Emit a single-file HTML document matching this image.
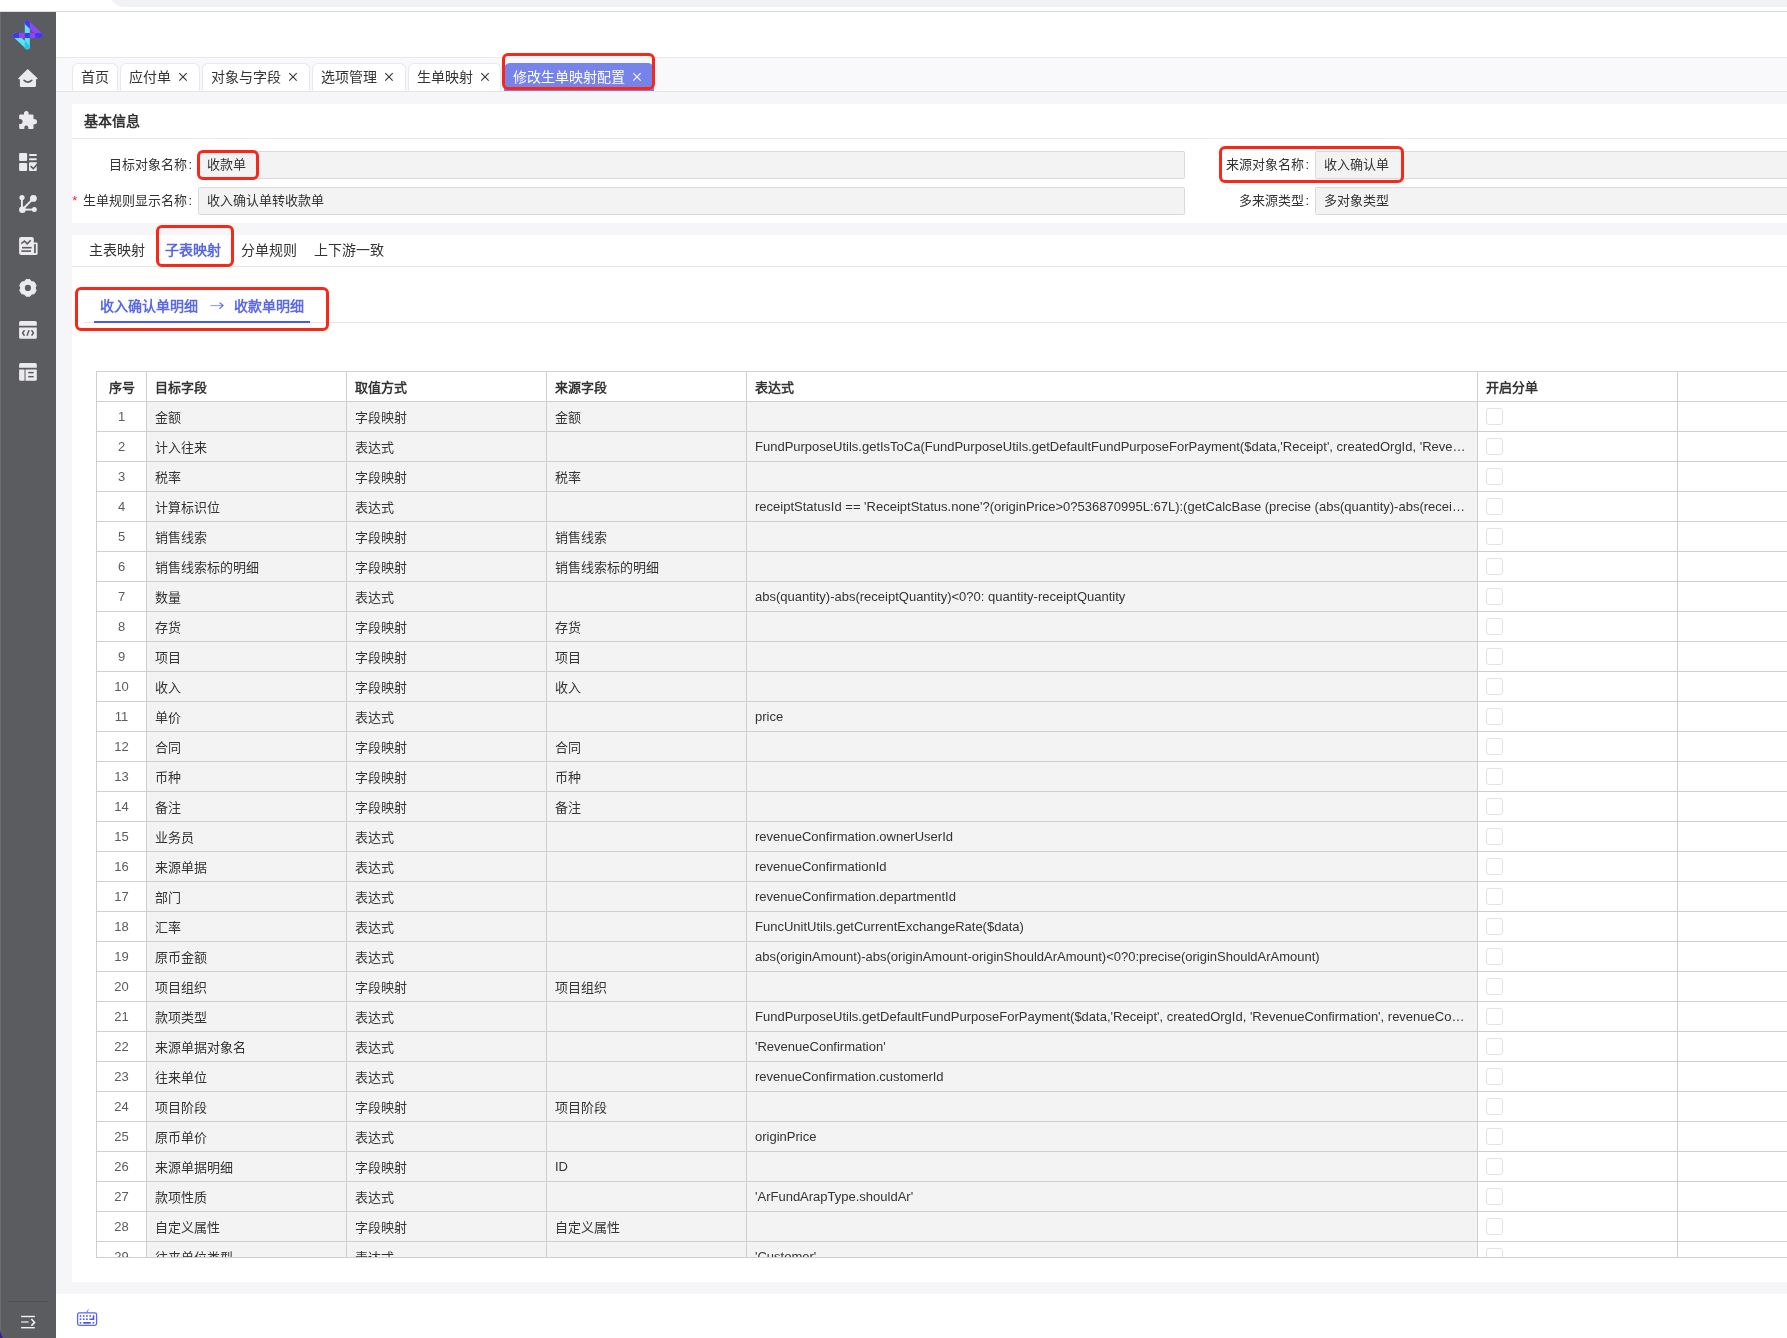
<!DOCTYPE html>
<html lang="zh-CN"><head><meta charset="utf-8">
<style>
*{box-sizing:border-box;margin:0;padding:0}
html,body{width:1787px;height:1338px;overflow:hidden;background:#fff;font-family:"Liberation Sans",sans-serif;color:#333;font-size:13px}
.abs{position:absolute}
#topline{left:0;top:11px;width:1787px;height:1px;background:#dcdde0}
#pill{left:110px;top:-20px;width:1700px;height:27px;background:#f1f2f4;border-radius:0 0 0 14px}
#side{left:0;top:12px;width:56px;height:1326px;background:#5b5c60}
#side .strip{left:0;top:0;width:1px;height:100%;background:#6c6d71}
#hdr{left:56px;top:12px;width:1731px;height:45px;background:#fff}
#tabbar{left:56px;top:57px;width:1731px;height:35px;background:#f9f9fb;border-top:1px solid #e9eaec;border-bottom:1px solid #e4e4e5}
.tab{position:absolute;top:63px;height:28px;background:#fff;border:1px solid #e6e9ee;border-bottom:none;border-radius:6px 6px 0 0;font-size:14px;line-height:27px;padding-left:8px;color:#333;white-space:nowrap}
#content{left:56px;top:92px;width:1731px;height:1202px;background:#f6f6f8}
#card1{left:72px;top:104px;width:1715px;height:119px;background:#fff}
#card2{left:72px;top:235px;width:1715px;height:1047px;background:#fff}
#foot{left:56px;top:1294px;width:1731px;height:44px;background:#fff}
.lbl{position:absolute;font-size:13px;color:#333;white-space:nowrap;line-height:16px}
.rl{text-align:right}
.co{font-style:normal;margin-left:1.5px}
.inp{position:absolute;height:28px;background:#f3f3f3;border:1px solid #d9d9d9;border-radius:1.5px;font-size:13px;line-height:26px;padding-left:8px;color:#333;white-space:nowrap}
.red{position:absolute;border:3px solid #f7281a;border-radius:6px}
.stab{position:absolute;top:241px;font-size:14px;line-height:18px;color:#333;white-space:nowrap}
#tblwrap{left:96px;top:371px;width:1691px;height:887px;overflow:hidden;border-bottom:1px solid #cfcfcf}
table{border-collapse:collapse;table-layout:fixed;width:1700px}
td,th{border:1px solid #cfcfcf;height:30px;font-size:13px;white-space:nowrap;overflow:hidden;text-overflow:ellipsis;padding:0 8px;text-align:left}
th{background:#fff;font-weight:bold;color:#333;padding-top:0}
td.n{text-align:center;color:#5c5c5c;background:#fff;padding:0}
td.g{background:#f3f3f3;color:#333}
td.w{background:#fff}
.cb{display:block;width:17px;height:17px;border:1px solid #e3e3e3;border-radius:3px;background:#fff}
#wrap{position:absolute;left:0;top:0;width:1787px;height:1338px;overflow:hidden;will-change:transform}
</style></head><body><div id="wrap">
<div class="abs" id="pill"></div>
<div class="abs" id="topline"></div>

<div class="abs" id="side"><div class="abs strip"></div></div>
<!-- logo -->
<svg class="abs" style="left:0;top:0" width="56" height="60" viewBox="0 0 56 60">
 <defs>
  <clipPath id="cv"><rect x="24.8" y="0" width="5" height="60"/></clipPath>
  <clipPath id="cl"><rect x="0" y="0" width="19.1" height="60"/></clipPath>
  <clipPath id="cr"><rect x="35.2" y="0" width="20" height="60"/></clipPath>
 </defs>
 <g stroke-linecap="round" stroke-width="5" fill="none">
  <line x1="27.3" y1="22.6" x2="27.3" y2="46.7" stroke="#5ee2f3"/>
  <line x1="15.5" y1="35.4" x2="27.3" y2="46.7" stroke="#5ee2f3"/>
  <line x1="15.5" y1="35.4" x2="27.3" y2="46.7" stroke="#22c6ee" clip-path="url(#cv)"/>
  <line x1="27.3" y1="22.6" x2="40.3" y2="35.4" stroke="#8b48f8"/>
  <line x1="15.5" y1="35.4" x2="40.3" y2="35.4" stroke="#8b48f8"/>
  <line x1="27.3" y1="22.6" x2="40.3" y2="35.4" stroke="#4338ea" clip-path="url(#cv)"/>
  <line x1="15.5" y1="35.4" x2="40.3" y2="35.4" stroke="#4338ea" clip-path="url(#cv)"/>
  <line x1="15.5" y1="35.4" x2="40.3" y2="35.4" stroke="#4338ea" clip-path="url(#cl)"/>
  <line x1="15.5" y1="35.4" x2="40.3" y2="35.4" stroke="#4338ea" clip-path="url(#cr)"/>
 </g>
</svg>

<div class="abs" id="hdr"></div>
<div class="abs" id="tabbar"></div>
<div class="tab" style="left:72px;width:46px">首页</div>
<div class="tab" style="left:120px;width:80px">应付单</div>
<div class="tab" style="left:202px;width:108px">对象与字段</div>
<div class="tab" style="left:312px;width:94px">选项管理</div>
<div class="tab" style="left:408px;width:93px">生单映射</div>
<div class="tab" style="left:504px;width:150px;background:#7683ea;border-color:#7683ea;color:#fff">修改生单映射配置</div>
<svg class="abs" style="left:178px;top:72px" width="10" height="10" viewBox="0 0 10 10"><path d="M1.3 1.1 L8.7 8.7 M8.7 1.1 L1.3 8.7" stroke="#333" stroke-width="1.1"/></svg><svg class="abs" style="left:288px;top:72px" width="10" height="10" viewBox="0 0 10 10"><path d="M1.3 1.1 L8.7 8.7 M8.7 1.1 L1.3 8.7" stroke="#333" stroke-width="1.1"/></svg><svg class="abs" style="left:384px;top:72px" width="10" height="10" viewBox="0 0 10 10"><path d="M1.3 1.1 L8.7 8.7 M8.7 1.1 L1.3 8.7" stroke="#333" stroke-width="1.1"/></svg><svg class="abs" style="left:480px;top:72px" width="10" height="10" viewBox="0 0 10 10"><path d="M1.3 1.1 L8.7 8.7 M8.7 1.1 L1.3 8.7" stroke="#333" stroke-width="1.1"/></svg><svg class="abs" style="left:632px;top:72px" width="10" height="10" viewBox="0 0 10 10"><path d="M1.3 1.1 L8.7 8.7 M8.7 1.1 L1.3 8.7" stroke="#fff" stroke-width="1.1"/></svg>
<div class="red" style="left:502px;top:52.5px;width:152.5px;height:37px"></div>

<div class="abs" id="content"></div>
<div class="abs" id="card1"></div>
<div class="abs" style="left:72px;top:138px;width:1715px;height:1px;background:#e9ebee"></div>
<div class="lbl" style="left:84px;top:113px;font-size:14px;font-weight:bold">基本信息</div>

<div class="lbl rl" style="left:0;width:192px;top:157px">目标对象名称<i class="co">:</i></div>
<div class="inp" style="left:198px;top:151px;width:987px">收款单</div>
<div class="red" style="left:197px;top:150px;width:62px;height:30px"></div>
<div class="lbl rl" style="left:0;width:192px;top:193px"><span style="color:#f5222d;margin-right:5.5px">*</span>生单规则显示名称<i class="co">:</i></div>
<div class="inp" style="left:198px;top:187px;width:987px">收入确认单转收款单</div>

<div class="lbl rl" style="left:1100px;width:209px;top:157px">来源对象名称<i class="co">:</i></div>
<div class="inp" style="left:1315px;top:151px;width:480px">收入确认单</div>
<div class="red" style="left:1219px;top:146px;width:185px;height:37px"></div>
<div class="lbl rl" style="left:1100px;width:209px;top:193px">多来源类型<i class="co">:</i></div>
<div class="inp" style="left:1315px;top:187px;width:480px">多对象类型</div>

<div class="abs" id="card2"></div>
<div class="stab" style="left:89px">主表映射</div>
<div class="stab" style="left:165px;color:#5867e4;font-weight:bold">子表映射</div>
<div class="stab" style="left:241px">分单规则</div>
<div class="stab" style="left:314px">上下游一致</div>
<div class="abs" style="left:72px;top:266px;width:1715px;height:1px;background:#e5e6e9"></div>
<div class="red" style="left:156px;top:225px;width:78px;height:42px"></div>

<div class="lbl" style="left:100px;top:298px;font-size:14px;color:#5a6ae4;font-weight:bold">收入确认单明细</div>
<svg class="abs" style="left:208px;top:300px" width="18" height="12" viewBox="0 0 18 12"><path d="M2.4 5.6 L15 5.6" stroke="#8c97ec" stroke-width="1"/><path d="M11.6 2.6 L15 5.6 L11.4 8.7" stroke="#5a69e2" stroke-width="1.2" fill="none"/></svg>
<div class="lbl" style="left:234px;top:298px;font-size:14px;color:#5a6ae4;font-weight:bold">收款单明细</div>
<div class="abs" style="left:84px;top:322px;width:1703px;height:1px;background:#e5e6e9"></div>
<div class="abs" style="left:94px;top:321px;width:216px;height:2px;background:#4b5be3"></div>
<div class="red" style="left:75px;top:287px;width:254px;height:44px"></div>

<div class="abs" id="tblwrap">
<table>
<colgroup><col style="width:50px"><col style="width:200px"><col style="width:200px"><col style="width:200px"><col style="width:731px"><col style="width:200px"><col style="width:119px"></colgroup>
<thead><tr><th style="text-align:center">序号</th><th>目标字段</th><th>取值方式</th><th>来源字段</th><th>表达式</th><th>开启分单</th><th></th></tr></thead>
<tbody>
<tr><td class="n">1</td><td class="g">金额</td><td class="g">字段映射</td><td class="g">金额</td><td class="g e"></td><td class="w"><i class="cb"></i></td><td class="w"></td></tr>
<tr><td class="n">2</td><td class="g">计入往来</td><td class="g">表达式</td><td class="g"></td><td class="g e">FundPurposeUtils.getIsToCa(FundPurposeUtils.getDefaultFundPurposeForPayment($data,'Receipt', createdOrgId, 'RevenueConfirmation', revenueConfirmationId))</td><td class="w"><i class="cb"></i></td><td class="w"></td></tr>
<tr><td class="n">3</td><td class="g">税率</td><td class="g">字段映射</td><td class="g">税率</td><td class="g e"></td><td class="w"><i class="cb"></i></td><td class="w"></td></tr>
<tr><td class="n">4</td><td class="g">计算标识位</td><td class="g">表达式</td><td class="g"></td><td class="g e">receiptStatusId == 'ReceiptStatus.none'?(originPrice>0?536870995L:67L):(getCalcBase (precise (abs(quantity)-abs(receiptQuantity))))</td><td class="w"><i class="cb"></i></td><td class="w"></td></tr>
<tr><td class="n">5</td><td class="g">销售线索</td><td class="g">字段映射</td><td class="g">销售线索</td><td class="g e"></td><td class="w"><i class="cb"></i></td><td class="w"></td></tr>
<tr><td class="n">6</td><td class="g">销售线索标的明细</td><td class="g">字段映射</td><td class="g">销售线索标的明细</td><td class="g e"></td><td class="w"><i class="cb"></i></td><td class="w"></td></tr>
<tr><td class="n">7</td><td class="g">数量</td><td class="g">表达式</td><td class="g"></td><td class="g e">abs(quantity)-abs(receiptQuantity)<0?0: quantity-receiptQuantity</td><td class="w"><i class="cb"></i></td><td class="w"></td></tr>
<tr><td class="n">8</td><td class="g">存货</td><td class="g">字段映射</td><td class="g">存货</td><td class="g e"></td><td class="w"><i class="cb"></i></td><td class="w"></td></tr>
<tr><td class="n">9</td><td class="g">项目</td><td class="g">字段映射</td><td class="g">项目</td><td class="g e"></td><td class="w"><i class="cb"></i></td><td class="w"></td></tr>
<tr><td class="n">10</td><td class="g">收入</td><td class="g">字段映射</td><td class="g">收入</td><td class="g e"></td><td class="w"><i class="cb"></i></td><td class="w"></td></tr>
<tr><td class="n">11</td><td class="g">单价</td><td class="g">表达式</td><td class="g"></td><td class="g e">price</td><td class="w"><i class="cb"></i></td><td class="w"></td></tr>
<tr><td class="n">12</td><td class="g">合同</td><td class="g">字段映射</td><td class="g">合同</td><td class="g e"></td><td class="w"><i class="cb"></i></td><td class="w"></td></tr>
<tr><td class="n">13</td><td class="g">币种</td><td class="g">字段映射</td><td class="g">币种</td><td class="g e"></td><td class="w"><i class="cb"></i></td><td class="w"></td></tr>
<tr><td class="n">14</td><td class="g">备注</td><td class="g">字段映射</td><td class="g">备注</td><td class="g e"></td><td class="w"><i class="cb"></i></td><td class="w"></td></tr>
<tr><td class="n">15</td><td class="g">业务员</td><td class="g">表达式</td><td class="g"></td><td class="g e">revenueConfirmation.ownerUserId</td><td class="w"><i class="cb"></i></td><td class="w"></td></tr>
<tr><td class="n">16</td><td class="g">来源单据</td><td class="g">表达式</td><td class="g"></td><td class="g e">revenueConfirmationId</td><td class="w"><i class="cb"></i></td><td class="w"></td></tr>
<tr><td class="n">17</td><td class="g">部门</td><td class="g">表达式</td><td class="g"></td><td class="g e">revenueConfirmation.departmentId</td><td class="w"><i class="cb"></i></td><td class="w"></td></tr>
<tr><td class="n">18</td><td class="g">汇率</td><td class="g">表达式</td><td class="g"></td><td class="g e">FuncUnitUtils.getCurrentExchangeRate($data)</td><td class="w"><i class="cb"></i></td><td class="w"></td></tr>
<tr><td class="n">19</td><td class="g">原币金额</td><td class="g">表达式</td><td class="g"></td><td class="g e">abs(originAmount)-abs(originAmount-originShouldArAmount)<0?0:precise(originShouldArAmount)</td><td class="w"><i class="cb"></i></td><td class="w"></td></tr>
<tr><td class="n">20</td><td class="g">项目组织</td><td class="g">字段映射</td><td class="g">项目组织</td><td class="g e"></td><td class="w"><i class="cb"></i></td><td class="w"></td></tr>
<tr><td class="n">21</td><td class="g">款项类型</td><td class="g">表达式</td><td class="g"></td><td class="g e">FundPurposeUtils.getDefaultFundPurposeForPayment($data,'Receipt', createdOrgId, 'RevenueConfirmation', revenueConfirmationId)</td><td class="w"><i class="cb"></i></td><td class="w"></td></tr>
<tr><td class="n">22</td><td class="g">来源单据对象名</td><td class="g">表达式</td><td class="g"></td><td class="g e">'RevenueConfirmation'</td><td class="w"><i class="cb"></i></td><td class="w"></td></tr>
<tr><td class="n">23</td><td class="g">往来单位</td><td class="g">表达式</td><td class="g"></td><td class="g e">revenueConfirmation.customerId</td><td class="w"><i class="cb"></i></td><td class="w"></td></tr>
<tr><td class="n">24</td><td class="g">项目阶段</td><td class="g">字段映射</td><td class="g">项目阶段</td><td class="g e"></td><td class="w"><i class="cb"></i></td><td class="w"></td></tr>
<tr><td class="n">25</td><td class="g">原币单价</td><td class="g">表达式</td><td class="g"></td><td class="g e">originPrice</td><td class="w"><i class="cb"></i></td><td class="w"></td></tr>
<tr><td class="n">26</td><td class="g">来源单据明细</td><td class="g">字段映射</td><td class="g">ID</td><td class="g e"></td><td class="w"><i class="cb"></i></td><td class="w"></td></tr>
<tr><td class="n">27</td><td class="g">款项性质</td><td class="g">表达式</td><td class="g"></td><td class="g e">'ArFundArapType.shouldAr'</td><td class="w"><i class="cb"></i></td><td class="w"></td></tr>
<tr><td class="n">28</td><td class="g">自定义属性</td><td class="g">字段映射</td><td class="g">自定义属性</td><td class="g e"></td><td class="w"><i class="cb"></i></td><td class="w"></td></tr>
<tr><td class="n">29</td><td class="g">往来单位类型</td><td class="g">表达式</td><td class="g"></td><td class="g e">'Customer'</td><td class="w"><i class="cb"></i></td><td class="w"></td></tr>
</tbody></table>
</div>

<div class="abs" id="foot"></div>
<svg class="abs" style="left:0;top:1330px" width="4" height="8" viewBox="0 0 4 8"><path d="M0 0 Q0.8 5 3 8 L0 8 Z" fill="#40199a"/></svg>
<!-- sidebar icons -->
<svg class="abs" style="left:14px;top:64px" width="28" height="28" viewBox="0 0 28 28">
 <path d="M13.7 4.9 L23.6 14.2 Q23.8 14.9 23 15.2 L22 15.2 L22 21.8 Q22 22.9 20.9 22.9 L7 22.9 Q5.9 22.9 5.9 21.8 L5.9 15.2 L4.9 15.2 Q4.1 14.9 4.3 14.2 Z" fill="#ebeaef"/>
 <path d="M10.1 16.4 Q13.9 19.9 17.7 16.4" stroke="#5b5c60" stroke-width="1.7" fill="none" stroke-linecap="round"/>
</svg>
<svg class="abs" style="left:14px;top:106px" width="28" height="28" viewBox="0 0 28 28">
 <path d="M5.2 9.6 Q5.2 8.4 6.4 8.4 L10 8.4 Q9.6 4.9 12.3 4.9 Q15 4.9 14.6 8.4 L18.3 8.4 Q19.5 8.4 19.5 9.6 L19.5 13.1 Q23 12.8 23 15.7 Q23 18.6 19.5 18.3 L19.5 21.9 Q19.5 23 18.3 23 L14.3 23 Q14.6 19.6 12.3 19.6 Q10 19.6 10.3 23 L6.4 23 Q5.2 23 5.2 21.8 L5.2 18 Q8.6 18.4 8.6 15.5 Q8.6 12.6 5.2 13 Z" fill="#ebeaef"/>
</svg>
<svg class="abs" style="left:14px;top:148px" width="28" height="28" viewBox="0 0 28 28">
 <rect x="5.1" y="4.9" width="8" height="8" rx="1.2" fill="#ebeaef"/>
 <rect x="5.1" y="14.9" width="8" height="8.1" rx="1.2" fill="#ebeaef"/>
 <rect x="15.1" y="6.1" width="7.6" height="2" rx="0.5" fill="#ebeaef"/>
 <rect x="15.1" y="10.3" width="7.6" height="1.9" rx="0.5" fill="#ebeaef"/>
 <path d="M15 15.2 Q15 14.2 16 14.2 L22.8 14.2 L22.8 22 Q22.8 23 21.8 23 L16 23 Q15 23 15 22 Z" fill="#ebeaef"/>
 <path d="M16.6 18.2 L19.3 20.7 L23.2 16.4" stroke="#5b5c60" stroke-width="1.6" fill="none"/>
</svg>
<svg class="abs" style="left:14px;top:190px" width="28" height="28" viewBox="0 0 28 28">
 <g fill="#ebeaef"><circle cx="8" cy="7.6" r="2.6"/><circle cx="19.4" cy="8.4" r="3.4"/><circle cx="8.4" cy="19.7" r="3.3"/><circle cx="20.3" cy="19.5" r="2.5"/></g>
 <g stroke="#ebeaef" stroke-width="1.9"><line x1="7.9" y1="8" x2="7.9" y2="19"/><line x1="8.4" y1="19.5" x2="19.4" y2="8.4"/><line x1="8.4" y1="19.6" x2="20.3" y2="19.6"/></g>
</svg>
<svg class="abs" style="left:14px;top:232px" width="28" height="28" viewBox="0 0 28 28">
 <rect x="5.1" y="4.9" width="14.7" height="18" rx="2" fill="#ebeaef"/>
 <path d="M17 10.5 L22.4 10.5 Q23.6 10.5 23.6 11.7 L23.6 21.5 Q23.6 22.9 22.2 22.9 L17 22.9 Z" fill="#ebeaef"/>
 <rect x="20.1" y="12.1" width="1.7" height="9" fill="#5b5c60"/>
 <path d="M7.3 11.7 L10.5 9 L13.2 11.9 L16.7 8.2" stroke="#5b5c60" stroke-width="1.6" fill="none"/>
 <line x1="8" y1="15.7" x2="17.6" y2="15.7" stroke="#5b5c60" stroke-width="1.6"/>
 <line x1="7.3" y1="19.1" x2="17" y2="19.1" stroke="#5b5c60" stroke-width="1.6"/>
</svg>
<svg class="abs" style="left:14px;top:274px" width="28" height="28" viewBox="0 0 28 28">
 <path d="M10.35 7.66 L12.02 5.52 L15.88 5.52 L17.55 7.66 L20.24 8.03 L22.17 11.39 L21.15 13.90 L22.17 16.41 L20.24 19.77 L17.55 20.14 L15.88 22.28 L12.02 22.28 L10.35 20.14 L7.66 19.77 L5.73 16.41 L6.75 13.90 L5.73 11.39 L7.66 8.03 Z" fill="#ebeaef" stroke="#ebeaef" stroke-width="0.9" stroke-linejoin="round"/>
 <circle cx="13.9" cy="13.9" r="3.1" fill="#5b5c60"/>
</svg>
<svg class="abs" style="left:14px;top:316px" width="28" height="28" viewBox="0 0 28 28">
 <path d="M5.1 6.6 Q5.1 5 6.7 5 L21.2 5 Q22.8 5 22.8 6.6 L22.8 9.8 L5.1 9.8 Z" fill="#ebeaef"/>
 <path d="M5.1 11.5 L22.8 11.5 L22.8 21.3 Q22.8 22.8 21.3 22.8 L6.6 22.8 Q5.1 22.8 5.1 21.3 Z" fill="#ebeaef"/>
 <g stroke="#5b5c60" stroke-width="1.5" fill="none"><path d="M10.5 14.2 L8.6 17 L10.5 19.7"/><path d="M15.1 14.2 L13 19.7"/><path d="M17.6 14.2 L19.4 17 L17.6 19.7"/></g>
</svg>
<svg class="abs" style="left:14px;top:358px" width="28" height="28" viewBox="0 0 28 28">
 <path d="M5.1 6.6 Q5.1 5 6.7 5 L21.2 5 Q22.8 5 22.8 6.6 L22.8 9.8 L5.1 9.8 Z" fill="#ebeaef"/>
 <path d="M5.1 11.5 L10.5 11.5 L10.5 22.8 L6.6 22.8 Q5.1 22.8 5.1 21.3 Z" fill="#ebeaef"/>
 <path d="M11.5 11.5 L22.8 11.5 L22.8 21.3 Q22.8 22.8 21.3 22.8 L11.5 22.8 Z" fill="#ebeaef"/>
 <g stroke="#5b5c60" stroke-width="1.5"><line x1="14.2" y1="14.6" x2="19.7" y2="14.6"/><line x1="14.2" y1="18.7" x2="19.7" y2="18.7"/></g>
</svg>
<!-- sidebar bottom separator + collapse -->
<div class="abs" style="left:8px;top:1301px;width:40px;height:1px;background:#4f5054"></div>
<svg class="abs" style="left:14px;top:1308px" width="28" height="28" viewBox="0 0 28 28">
 <g stroke="#f4f4f6" stroke-width="1.4" fill="none"><line x1="7.1" y1="8.5" x2="20.9" y2="8.5"/><line x1="7.1" y1="14" x2="14.6" y2="14" stroke="#dcdcdf"/><line x1="7.1" y1="19.7" x2="20.7" y2="19.7"/><path d="M17.4 11.1 L20.6 14.4 L17.4 17.6" stroke-width="1.5"/></g>
</svg>
<!-- keyboard -->
<svg class="abs" style="left:72px;top:1304px" width="30" height="30" viewBox="0 0 30 30">
 <rect x="5.6" y="8.8" width="19" height="12.6" rx="1.8" stroke="#5b68ea" stroke-width="1.3" fill="none"/>
 <path d="M14.8 8.6 L15.6 6.5 L16.6 5.6" stroke="#5b68ea" stroke-width="1" fill="none"/>
 <g fill="#4a58e6">
  <rect x="7.7" y="11.2" width="1.6" height="1.6"/><rect x="10.9" y="11.2" width="1.6" height="1.6"/><rect x="14.1" y="11.2" width="1.6" height="1.6"/><rect x="17.4" y="11.2" width="1.6" height="1.6"/>
  <rect x="7.7" y="14.4" width="1.6" height="1.6"/><rect x="10.9" y="14.4" width="1.6" height="1.6"/><rect x="14.1" y="14.4" width="1.6" height="1.6"/>
  <path d="M20.7 11.2 L22.3 11.2 L22.3 16 L17.4 16 L17.4 14.4 L20.7 14.4 Z"/>
  <rect x="7.7" y="18.1" width="1.6" height="1.6"/><rect x="11.1" y="18.1" width="7.8" height="1.6" rx="0.6"/><rect x="20.6" y="18.1" width="1.6" height="1.6"/>
 </g>
</svg>

</div></body></html>
